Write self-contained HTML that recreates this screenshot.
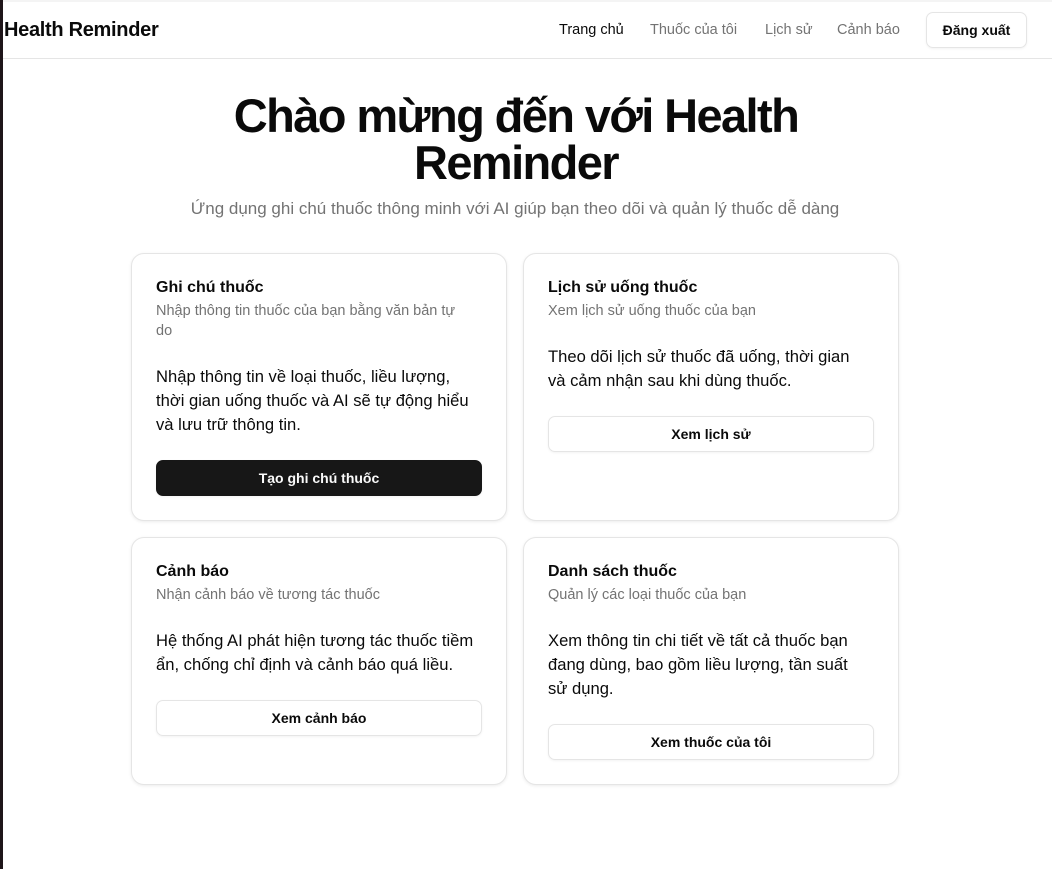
<!DOCTYPE html>
<html><head><meta charset="utf-8"><style>
*{box-sizing:border-box;margin:0;padding:0}
body{width:1052px;height:869px;background:#fff;font-family:"Liberation Sans",sans-serif;color:#0a0a0a;position:relative;overflow:hidden}
.lbar{position:absolute;left:0;top:0;width:3px;height:869px;background:#1e1519}
.top{position:absolute;left:3px;top:0;right:0;height:2px;background:#f4f4f4}
header{position:absolute;left:3px;right:0;top:2px;height:57px;border-bottom:1px solid #e5e5e5}
.logo{position:absolute;left:1px;top:17px;font-size:20px;font-weight:bold;letter-spacing:-0.3px}
.nav{position:absolute;top:20px;font-size:14.5px;color:#737373}
.out{position:absolute;left:923px;top:10px;width:101px;height:36px;border:1px solid #e5e5e5;border-radius:7px;font-size:14px;font-weight:bold;display:flex;align-items:center;justify-content:center;box-shadow:0 1px 2px rgba(0,0,0,.05)}
h1{position:absolute;left:0;width:1032px;top:92px;text-align:center;font-size:47px;line-height:47px;font-weight:bold;letter-spacing:-1.6px}
.sub{position:absolute;left:0;width:1030px;top:199px;text-align:center;font-size:17px;color:#737373}
.card{position:absolute;width:376px;border:1px solid #e5e5e5;border-radius:13px;box-shadow:0 1px 3px rgba(0,0,0,.08);padding:23px 24px}
.card h3{font-size:16px;font-weight:bold;line-height:20px;margin-top:1px}
.card .d{font-size:14.5px;color:#737373;line-height:20px;margin-top:3px}
.card p{font-size:16.6px;line-height:24px;margin-top:24px}
.btn{margin-top:23px;height:36px;border:1px solid #e5e5e5;border-radius:7px;font-size:14px;font-weight:bold;display:flex;align-items:center;justify-content:center;box-shadow:0 1px 2px rgba(0,0,0,.05)}
.btn.dark{background:#171717;color:#fafafa;border-color:#171717}
</style></head><body>
<div class="lbar"></div><div class="top"></div>
<header>
<div class="logo">Health Reminder</div>
<div class="nav" style="left:556px;color:#0a0a0a">Trang chủ</div>
<div class="nav" style="left:647px">Thuốc của tôi</div>
<div class="nav" style="left:762px">Lịch sử</div>
<div class="nav" style="left:834px">Cảnh báo</div>
<div class="out">Đăng xuất</div>
</header>
<h1>Chào mừng đến với Health<br>Reminder</h1>
<div class="sub">Ứng dụng ghi chú thuốc thông minh với AI giúp bạn theo dõi và quản lý thuốc dễ dàng</div>

<div class="card" style="left:131px;top:253px;height:268px">
<h3>Ghi chú thuốc</h3>
<div class="d">Nhập thông tin thuốc của bạn bằng văn bản tự<br>do</div>
<p>Nhập thông tin về loại thuốc, liều lượng,<br>thời gian uống thuốc và AI sẽ tự động hiểu<br>và lưu trữ thông tin.</p>
<div class="btn dark">Tạo ghi chú thuốc</div>
</div>
<div class="card" style="left:523px;top:253px;height:268px">
<h3>Lịch sử uống thuốc</h3>
<div class="d">Xem lịch sử uống thuốc của bạn</div>
<p>Theo dõi lịch sử thuốc đã uống, thời gian<br>và cảm nhận sau khi dùng thuốc.</p>
<div class="btn">Xem lịch sử</div>
</div>
<div class="card" style="left:131px;top:537px;height:248px">
<h3>Cảnh báo</h3>
<div class="d">Nhận cảnh báo về tương tác thuốc</div>
<p>Hệ thống AI phát hiện tương tác thuốc tiềm<br>ẩn, chống chỉ định và cảnh báo quá liều.</p>
<div class="btn">Xem cảnh báo</div>
</div>
<div class="card" style="left:523px;top:537px;height:248px">
<h3>Danh sách thuốc</h3>
<div class="d">Quản lý các loại thuốc của bạn</div>
<p>Xem thông tin chi tiết về tất cả thuốc bạn<br>đang dùng, bao gồm liều lượng, tần suất<br>sử dụng.</p>
<div class="btn">Xem thuốc của tôi</div>
</div>
</body></html>
